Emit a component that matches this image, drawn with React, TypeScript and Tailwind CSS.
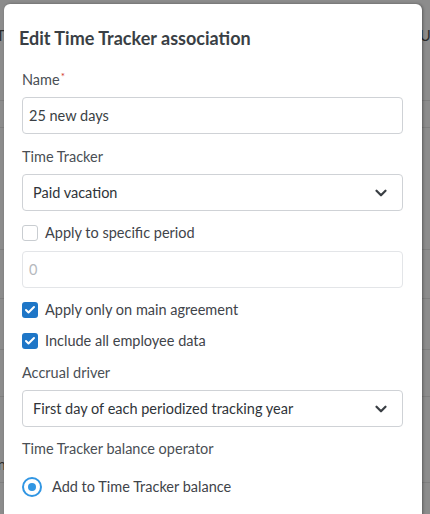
import { ChevronDown, Check } from "lucide-react";

const font = { fontFamily: '"Source Sans Pro", Lato, "Noto Sans", sans-serif' };

function Label({ children, required }: { children: React.ReactNode; required?: boolean }) {
  return (
    <div className="text-[14.5px] leading-5 text-[#4a4f55]">
      {children}
      {required && <sup className="text-[#d0342c] text-[10px] ml-[1px]">*</sup>}
    </div>
  );
}

function Select({ value }: { value: string }) {
  return (
    <div className="h-[37px] border border-[#cfd2d6] rounded-[4px] flex items-center justify-between pl-[10px] pr-[12px] text-[14.5px] text-[#2f3439]">
      <span>{value}</span>
      <ChevronDown size={18} strokeWidth={3} className="text-[#3a3f44]" />
    </div>
  );
}

function CheckRow({ label, checked }: { label: string; checked?: boolean }) {
  return (
    <div className="flex items-center gap-[7px] h-5">
      {checked ? (
        <span className="w-[16px] h-[16px] rounded-[3px] bg-[#1e76c7] flex items-center justify-center">
          <Check size={12} strokeWidth={4} className="text-white" />
        </span>
      ) : (
        <span className="w-[16px] h-[16px] rounded-[3px] border border-[#c9cdd1] bg-white" />
      )}
      <span className="text-[14.5px] text-[#3f444a]">{label}</span>
    </div>
  );
}

export default function App() {
  return (
    <div className="relative w-[430px] h-[514px] overflow-hidden bg-[#8c8c8c]" style={font}>
      {/* page behind the overlay */}
      <div className="flex flex-col text-[15px] text-[#2c2c2c]">
        <div className="h-[101px] border-b border-[#7f7f7f] flex justify-between pt-[24px]">
          <span className="-ml-[4px]">Ti</span>
          <span className="-mr-[6px]">Ur</span>
        </div>
        <div className="h-[27px] border-b border-[#7f7f7f]" />
        <div className="h-[122px] border-b border-[#7f7f7f]" />
        <div className="h-[49px] border-b border-[#7f7f7f]" />
        <div className="h-[51px] border-b border-[#7f7f7f]" />
        <div className="h-[47px] border-b border-[#7f7f7f]" />
        <div className="h-[86px] border-b border-[#7f7f7f] flex items-end pb-[7px]">
          <span className="-ml-[6px]">in</span>
        </div>
      </div>

      {/* modal */}
      <div className="absolute left-[4px] top-[4px] w-[418px] h-[540px] bg-white rounded-[6px] shadow-[1px_0_3px_rgba(0,0,0,0.35)]">
        <div className="pl-[15px] pt-[22px]">
          <h2 className="text-[18px] leading-6 font-bold text-[#3a3f45]">Edit Time Tracker association</h2>
        </div>
        <div className="px-[18px] pr-[19px] mt-[20px] flex flex-col">
          <Label required>Name</Label>
          <div className="mt-[7px] h-[37px] border border-[#cfd2d6] rounded-[4px] flex items-center px-[6px] text-[14.5px] text-[#3a3f44]">
            25 new days
          </div>

          <div className="mt-[13px]">
            <Label>Time Tracker</Label>
          </div>
          <div className="mt-[7px]">
            <Select value="Paid vacation" />
          </div>

          <div className="mt-[12px]">
            <CheckRow label="Apply to specific period" />
          </div>

          <div className="mt-[8px] h-[37px] border border-[#e3e5e8] rounded-[4px] flex items-center px-[6px] text-[14.5px] text-[#b5b9bd]">
            0
          </div>

          <div className="mt-[12px]">
            <CheckRow label="Apply only on main agreement" checked />
          </div>
          <div className="mt-[11px]">
            <CheckRow label="Include all employee data" checked />
          </div>

          <div className="mt-[12px]">
            <Label>Accrual driver</Label>
          </div>
          <div className="mt-[7px]">
            <Select value="First day of each periodized tracking year" />
          </div>

          <div className="mt-[12px]">
            <Label>Time Tracker balance operator</Label>
          </div>

          <div className="mt-[17px] flex items-center gap-[10px]">
            <span className="w-[20px] h-[20px] rounded-full border-[2px] border-[#3196e3] flex items-center justify-center">
              <span className="w-[8px] h-[8px] rounded-full bg-[#3196e3]" />
            </span>
            <span className="text-[14.5px] text-[#3f444a]">Add to Time Tracker balance</span>
          </div>
        </div>
      </div>
    </div>
  );
}
